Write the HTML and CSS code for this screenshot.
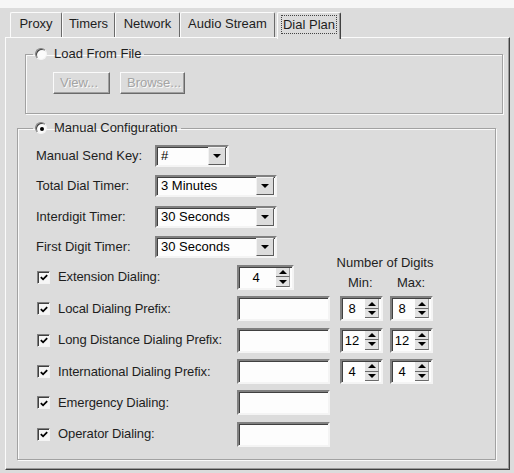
FILE: index.html
```html
<!DOCTYPE html>
<html>
<head>
<meta charset="utf-8">
<title>Dial Plan</title>
<link rel="stylesheet" href="styles.css">
</head>
<body>
<div class="window">
  <div class="tabs">
    <div class="tab tab-proxy">Proxy</div>
    <div class="tab tab-timers">Timers</div>
    <div class="tab tab-network">Network</div>
    <div class="tab tab-audio">Audio Stream</div>
    <div class="tab active"><span class="focus">Dial Plan</span></div>
  </div>
  <div class="panel">
    <fieldset class="group load">
      <legend><span class="radio"></span>Load From File</legend>
      <div class="load-body">
        <button class="btn btn-view" disabled>View...</button>
        <button class="btn btn-browse" disabled>Browse...</button>
      </div>
    </fieldset>
    <fieldset class="group manual">
      <legend><span class="radio on"></span>Manual Configuration</legend>
      <div class="manual-body">
        <div class="timers">
          <span class="lbl">Manual Send Key:</span>
          <div class="combo short"><span class="cval">#</span><span class="drop"></span></div>
          <span class="lbl">Total Dial Timer:</span>
          <div class="combo long"><span class="cval">3 Minutes</span><span class="drop"></span></div>
          <span class="lbl">Interdigit Timer:</span>
          <div class="combo long"><span class="cval">30 Seconds</span><span class="drop"></span></div>
          <span class="lbl">First Digit Timer:</span>
          <div class="combo long"><span class="cval">30 Seconds</span><span class="drop"></span></div>
        </div>
        <div class="dialing">
          <label class="chk"><span class="box"><svg viewBox="0 0 11 11" width="11" height="11"><polyline points="2,5 4.5,7.5 9,3" fill="none" stroke="#000" stroke-width="2"/></svg></span>Extension Dialing:</label>
          <div class="spin ext"><span class="val">4</span><span class="arrows"><i class="up"></i><i class="down"></i></span></div>
          <div class="digits-head">
            <span class="dh-title">Number of Digits</span>
            <span class="dh-min">Min:</span>
            <span class="dh-max">Max:</span>
          </div>

          <label class="chk"><span class="box"><svg viewBox="0 0 11 11" width="11" height="11"><polyline points="2,5 4.5,7.5 9,3" fill="none" stroke="#000" stroke-width="2"/></svg></span>Local Dialing Prefix:</label>
          <div class="field"></div>
          <div class="spin small"><span class="val">8</span><span class="arrows"><i class="up"></i><i class="down"></i></span></div>
          <div class="spin small"><span class="val">8</span><span class="arrows"><i class="up"></i><i class="down"></i></span></div>

          <label class="chk"><span class="box"><svg viewBox="0 0 11 11" width="11" height="11"><polyline points="2,5 4.5,7.5 9,3" fill="none" stroke="#000" stroke-width="2"/></svg></span>Long Distance Dialing Prefix:</label>
          <div class="field"></div>
          <div class="spin small"><span class="val">12</span><span class="arrows"><i class="up"></i><i class="down"></i></span></div>
          <div class="spin small"><span class="val">12</span><span class="arrows"><i class="up"></i><i class="down"></i></span></div>

          <label class="chk"><span class="box"><svg viewBox="0 0 11 11" width="11" height="11"><polyline points="2,5 4.5,7.5 9,3" fill="none" stroke="#000" stroke-width="2"/></svg></span>International Dialing Prefix:</label>
          <div class="field"></div>
          <div class="spin small"><span class="val">4</span><span class="arrows"><i class="up"></i><i class="down"></i></span></div>
          <div class="spin small"><span class="val">4</span><span class="arrows"><i class="up"></i><i class="down"></i></span></div>

          <label class="chk"><span class="box"><svg viewBox="0 0 11 11" width="11" height="11"><polyline points="2,5 4.5,7.5 9,3" fill="none" stroke="#000" stroke-width="2"/></svg></span>Emergency Dialing:</label>
          <div class="field"></div>
          <span></span><span></span>

          <label class="chk"><span class="box"><svg viewBox="0 0 11 11" width="11" height="11"><polyline points="2,5 4.5,7.5 9,3" fill="none" stroke="#000" stroke-width="2"/></svg></span>Operator Dialing:</label>
          <div class="field"></div>
        </div>
      </div>
    </fieldset>
  </div>
</div>
</body>
</html>
```
FILE: styles.css
```css
* { box-sizing: border-box; }
html, body { margin: 0; padding: 0; }
body {
  background: #f6f6f6;
  font-family: "Liberation Sans", Arial, sans-serif;
  font-size: 13px;
  line-height: 16px;
  color: #1e1e1e;
  width: 514px;
  height: 473px;
  overflow: hidden;
}
.window {
  margin-top: 8px;
  height: 465px;
  background: #dcdcdc;
  padding: 4px 4px 0 5px;
}

/* Tabs */
.tabs {
  display: flex;
  align-items: flex-end;
  height: 25px;
  padding-left: 5px;
  position: relative;
  z-index: 2;
}
.tab {
  height: 25px;
  padding: 0;
  text-align: center;
  line-height: 22px;
  background: #dcdcdc;
  border-top: 1px solid #fbfbfb;
  border-left: 1px solid #fbfbfb;
  border-right: 1px solid #6a6a6a;
  border-radius: 2px 2px 0 0;
}
.tab-proxy { width: 52px; }
.tab-timers { width: 53px; }
.tab-network { width: 65px; }
.tab-audio { width: 95px; }
.tab.active {
  width: 64px;
  height: 27px;
  margin-bottom: -2px;
  margin-left: 2px;
  padding: 3px 0 0 0;
  line-height: 16px;
  border-right-color: #404040;
  box-shadow: inset -1px 0 0 #9a9a9a;
}
.focus {
  display: inline-block;
  outline: 1px dotted #444;
  padding: 0 1px;
  line-height: 17px;
}

/* Panel */
.panel {
  height: 433px;
  border: 1px solid;
  border-color: #fbfbfb #404040 #404040 #fbfbfb;
  box-shadow: inset -1px -1px 0 #9a9a9a;
  position: relative;
  z-index: 1;
}

/* Group boxes */
.group {
  border: 1px solid #a2a2a2;
  box-shadow: 1px 1px 0 #fafafa, inset 1px 1px 0 #fafafa;
  padding: 0;
  min-width: 0;
}
.group legend {
  display: flex;
  align-items: center;
  height: 16px;
  padding: 0 3px 0 2px;
  color: #1e1e1e;
}
.load {
  margin: 8px 6px 0 19px;
}
.load legend { margin-left: 7px; }
.manual {
  margin: 6px 13px 0 11px;
}
.manual legend { margin-left: 15px; }

.radio {
  width: 12px;
  height: 12px;
  margin-right: 7px;
  border-radius: 50%;
  border: 1px solid;
  border-color: #808080 #f4f4f4 #f4f4f4 #808080;
  box-shadow: inset 1px 1px 0 #404040;
  background: #fbfbfb;
  display: flex;
  align-items: center;
  justify-content: center;
}
.radio.on::after {
  content: "";
  width: 4px;
  height: 4px;
  border-radius: 50%;
  background: #000;
  margin: 1px 0 0 1px;
}

/* Load body */
.load-body {
  display: flex;
  gap: 10px;
  padding: 10px 0 19px 27px;
}
.btn {
  height: 22px;
  font: inherit;
  color: #a4a4a4;
  text-shadow: 1px 1px 0 #fafafa;
  background: #dcdcdc;
  border: 1px solid;
  border-color: #fafafa #6a6a6a #6a6a6a #fafafa;
  box-shadow: inset -1px -1px 0 #a0a0a0;
  padding: 0 6px;
  text-align: left;
}
.btn-view { width: 57px; }
.btn-browse { width: 65px; }

/* Manual body */
.manual-body {
  padding: 9px 0 12px 18px;
}
.timers {
  display: grid;
  grid-template-columns: 119px auto;
  grid-auto-rows: 22px;
  row-gap: 8.3px;
  align-items: center;
  justify-items: start;
}
.lbl { white-space: nowrap; }

.combo {
  height: 22px;
  display: flex;
  align-items: stretch;
  background: #fdfdfd;
  border: 2px solid;
  border-color: #808080 #f4f4f4 #f4f4f4 #808080;
  box-shadow: inset 1px 1px 0 #404040;
}
.combo.short { width: 74px; }
.combo.long { width: 122px; }
.cval {
  flex: 1;
  padding-left: 4px;
  line-height: 18px;
  color: #000;
}
.drop {
  width: 18px;
  margin: 0 1px 0 0;
  background: #dcdcdc;
  border: 1px solid;
  border-color: #f2f2f2 #5c5c5c #5c5c5c #f2f2f2;
  display: flex;
  align-items: center;
  justify-content: center;
}
.drop::after {
  content: "";
  border-left: 4px solid transparent;
  border-right: 4px solid transparent;
  border-top: 4px solid #000;
}

.dialing {
  margin-top: 7px;
  display: grid;
  grid-template-columns: 201px 103px 50px 43px;
  grid-auto-rows: 25px;
  row-gap: 6.4px;
  align-items: center;
  justify-items: start;
}
.chk {
  display: flex;
  align-items: center;
  white-space: nowrap;
  letter-spacing: -0.1px;
}
.box {
  width: 13px;
  height: 13px;
  margin: 0 8px 0 1px;
  border: 1px solid;
  border-color: #808080 #f4f4f4 #f4f4f4 #808080;
  box-shadow: inset 1px 1px 0 #404040;
  background: #f6f6f6;
  display: flex;
  align-items: center;
  justify-content: center;
}
.box svg { display: block; margin: 1px 0 0 1px; }

.field {
  width: 93px;
  height: 25px;
  background: #fdfdfd;
  border: 2px solid;
  border-color: #808080 #f4f4f4 #f4f4f4 #808080;
  box-shadow: inset 1px 1px 0 #404040;
}

.spin {
  height: 25px;
  display: flex;
  align-items: stretch;
  background: #fdfdfd;
  border: 2px solid;
  border-color: #808080 #f4f4f4 #f4f4f4 #808080;
  box-shadow: inset 1px 1px 0 #404040;
  padding: 1px 2px 1px 0;
}
.spin.ext { width: 57px; }
.spin.small { width: 43px; }
.val {
  flex: 1;
  text-align: center;
  line-height: 19px;
  color: #000;
  padding-right: 3px;
}
.arrows {
  width: 14px;
  display: flex;
  flex-direction: column;
}
.arrows i {
  flex: 1;
  display: flex;
  align-items: center;
  justify-content: center;
  background: #e2e2e2;
  border-bottom: 1px solid #6a6a6a;
  border-right: 1px solid #9a9a9a;
}
.arrows .up::after {
  content: "";
  border-left: 4px solid transparent;
  border-right: 4px solid transparent;
  border-bottom: 4px solid #000;
}
.arrows .down::after {
  content: "";
  border-left: 4px solid transparent;
  border-right: 4px solid transparent;
  border-top: 4px solid #000;
}

.digits-head {
  grid-column: 3 / 5;
  grid-row: 1;
  align-self: start;
  margin-top: -12px;
  display: grid;
  grid-template-columns: 50px 43px;
  grid-auto-rows: 20px;
  align-items: center;
  white-space: nowrap;
}
.dh-title {
  grid-column: 1 / 3;
  justify-self: center;
  margin-left: -3px;
}
.dh-min { padding-left: 8px; }
.dh-max { padding-left: 7px; }
```
